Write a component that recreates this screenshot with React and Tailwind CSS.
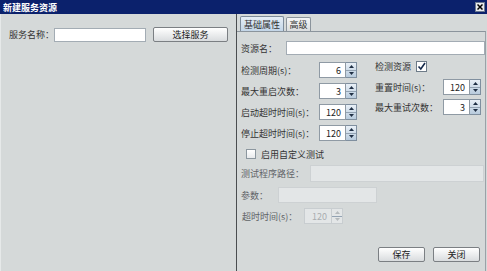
import React from "react";

const font = { fontFamily: '"Noto Sans CJK SC", "Noto Sans", sans-serif' };

function Spinner({ value, disabled, w = "w-[38px]" }) {
  return (
    <div className={`flex h-full ${w}`}>
      <div
        className={`flex-1 flex items-center justify-end pr-[4px] border ${
          disabled ? "bg-[#e3e6e7] border-[#c8cdd0] text-[#a9adb0]" : "bg-white border-[#8f9aa4] text-[#222]"
        }`}
      >
        {value}
      </div>
      <div
        className={`w-[11px] flex flex-col border border-l-0 ${
          disabled ? "bg-[#e3e6e7] border-[#c8cdd0]" : "bg-gradient-to-b from-[#e9f0f7] to-[#b8cbdd] border-[#7f8f9f]"
        }`}
      >
        <div className="flex-1 flex items-center justify-center border-b border-[#93a3b3]">
          <svg width="5" height="3" viewBox="0 0 5 3">
            <path d="M0 3 L2.5 0 L5 3 Z" fill={disabled ? "#b5babd" : "#1f2f44"} />
          </svg>
        </div>
        <div className="flex-1 flex items-center justify-center">
          <svg width="5" height="3" viewBox="0 0 5 3">
            <path d="M0 0 L2.5 3 L5 0 Z" fill={disabled ? "#b5babd" : "#1f2f44"} />
          </svg>
        </div>
      </div>
    </div>
  );
}

function Btn({ children, w }) {
  return (
    <div
      className={`${w} h-[15px] flex items-center justify-center border border-[#7b7f83] rounded-[2px] bg-gradient-to-b from-[#ffffff] to-[#d9dcde] text-[#222]`}
    >
      {children}
    </div>
  );
}

export default function App() {
  return (
    <div
      className="w-[487px] h-[271px] bg-[#d5d9d9] flex flex-col text-[9px] leading-none text-[#333] overflow-hidden"
      style={font}
    >
      {/* Title bar */}
      <div className="h-[14px] bg-[#0b216c] flex items-center justify-between pl-[3px] pr-[2px]">
        <span className="text-white font-bold text-[9px]">新建服务资源</span>
        <div className="w-[10px] h-[10px] bg-[#e8eaee] border border-[#6c7a90] flex items-center justify-center">
          <svg width="6" height="6" viewBox="0 0 6 6">
            <path d="M0.5 0.5 L5.5 5.5 M5.5 0.5 L0.5 5.5" stroke="#000" strokeWidth="1.5" />
          </svg>
        </div>
      </div>

      <div className="flex flex-1">
        {/* Left panel */}
        <div className="w-[237px] border-r border-[#4a4d50] border-l border-l-[#e6e9e9] pt-[13px]">
          <div className="flex items-center h-[15px] pl-[8px]">
            <span className="w-[45px]">服务名称：</span>
            <div className="w-[92px] h-[14px] bg-white border border-[#a3acb4]" />
            <div className="ml-[7px]">
              <Btn w="w-[75px]">选择服务</Btn>
            </div>
          </div>
        </div>

        {/* Right panel */}
        <div className="flex-1 flex flex-col pt-[1px]">
          <div className="flex items-end h-[16px] pl-[3px] gap-[2px]">
            <div className="h-[15px] w-[44px] flex items-center justify-center border border-b-0 border-[#7c8b9a] rounded-t-[2px] bg-gradient-to-b from-[#e6eef6] to-[#c2d5e7]">
              基础属性
            </div>
            <div className="h-[14px] w-[25px] flex items-center justify-center border border-b-0 border-[#8b949c] rounded-t-[2px] bg-gradient-to-b from-[#f4f5f6] to-[#dadddf]">
              高级
            </div>
          </div>
          <div className="flex-1 flex flex-col border-t border-[#8b949c] border-r border-r-[#9aa2a8] mr-[1px] pl-[4px]">
            {/* 资源名 */}
            <div className="flex items-center h-[14px] mt-[9px]">
              <span className="w-[45px]">资源名：</span>
              <div className="w-[199px] h-full bg-white border border-[#a3acb4]" />
            </div>

            {/* two columns */}
            <div className="flex mt-[6px]">
              <div className="w-[134px] flex flex-col gap-[5px] pt-[1px]">
                {[
                  ["检测周期(s)：", "6"],
                  ["最大重启次数：", "3"],
                  ["启动超时时间(s)：", "120"],
                  ["停止超时时间(s)：", "120"],
                ].map(([l, v]) => (
                  <div key={l} className="flex items-center h-[16px]">
                    <span className="w-[78px]">{l}</span>
                    <Spinner value={v} />
                  </div>
                ))}
              </div>
              <div className="flex flex-col">
                <div className="flex items-center h-[11px]">
                  <span className="w-[41px]">检测资源</span>
                  <div className="w-[11px] h-[11px] bg-white border border-[#6d7b88] flex items-center justify-center">
                    <svg width="9" height="9" viewBox="0 0 9 9">
                      <path d="M1.5 4.5 L3.8 7 L8 1" stroke="#14294a" strokeWidth="1.6" fill="none" />
                    </svg>
                  </div>
                </div>
                <div className="flex flex-col gap-[4px] mt-[7px]">
                  {[
                    ["重置时间(s)：", "120"],
                    ["最大重试次数：", "3"],
                  ].map(([l, v]) => (
                    <div key={l} className="flex items-center h-[16px]">
                      <span className="w-[68px]">{l}</span>
                      <Spinner value={v} />
                    </div>
                  ))}
                </div>
              </div>
            </div>

            {/* custom test checkbox */}
            <div className="flex items-center h-[10px] mt-[8px] pl-[5px]">
              <div className="w-[10px] h-[10px] bg-gradient-to-b from-white to-[#e8eaec] border border-[#8c979f]" />
              <span className="ml-[5px]">启用自定义测试</span>
            </div>

            <div className="flex items-center h-[17px] mt-[6px] text-[#5f6367]">
              <span className="w-[69px]">测试程序路径：</span>
              <div className="w-[174px] h-full bg-[#e3e6e7] border border-[#cdd1d3]" />
            </div>

            <div className="flex items-center h-[16px] mt-[5px] text-[#5f6367]">
              <span className="w-[37px]">参数：</span>
              <div className="w-[99px] h-full bg-[#e3e6e7] border border-[#cdd1d3]" />
            </div>

            <div className="flex items-center h-[16px] mt-[5px] text-[#5f6367]">
              <span className="w-[63px] pl-[1px]">超时时间(s)：</span>
              <Spinner value="120" disabled w="w-[39px]" />
            </div>

            <div className="flex justify-end gap-[8px] mt-auto mb-[9px] pr-[5px]">
              <Btn w="w-[47px]">保存</Btn>
              <Btn w="w-[47px]">关闭</Btn>
            </div>
          </div>
        </div>
      </div>
    </div>
  );
}
